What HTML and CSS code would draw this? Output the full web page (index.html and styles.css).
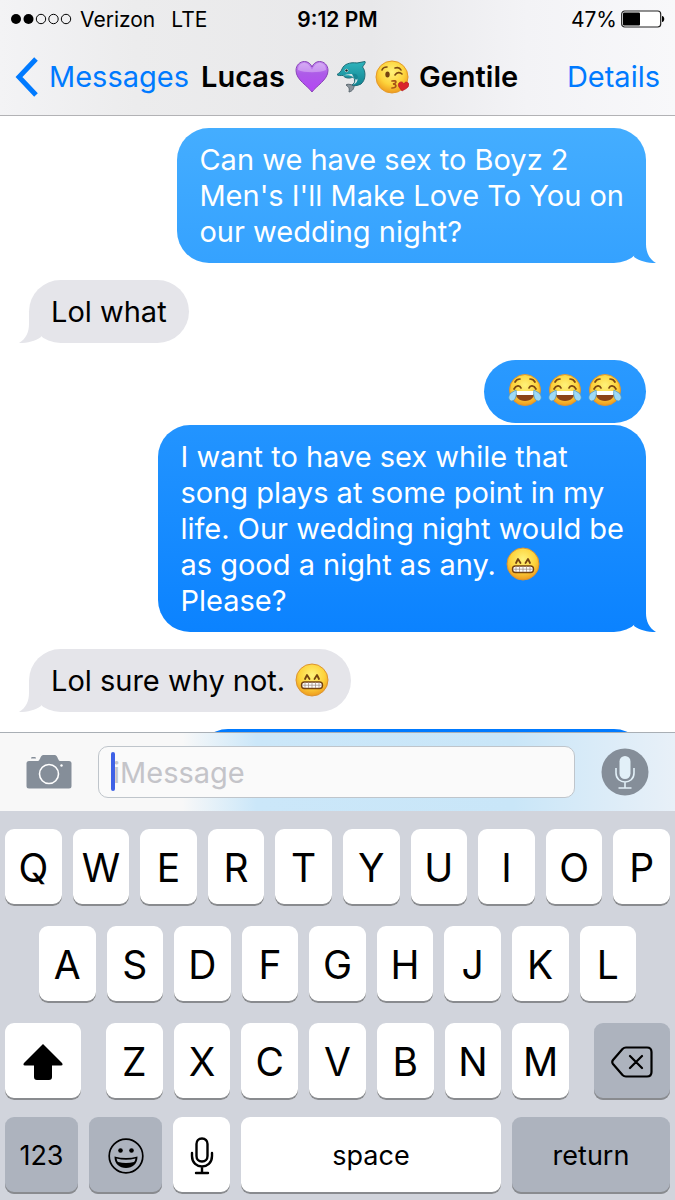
FILE: index.html
```html
<!DOCTYPE html>
<html lang="en">
<head>
  <meta charset="UTF-8">
  <meta name="viewport" content="width=device-width, initial-scale=1.0">
  <title>Messages</title>
  <link rel="stylesheet" href="styles.css">
</head>
<body>
  <!-- emoji shapes -->
  <svg class="defs" aria-hidden="true">
    <defs>
      <radialGradient id="yellow" cx="50%" cy="35%" r="65%">
        <stop offset="0" stop-color="#fff27a"/>
        <stop offset="0.6" stop-color="#fdd33b"/>
        <stop offset="1" stop-color="#ee9a1e"/>
      </radialGradient>
      <linearGradient id="purple" x1="0" y1="0" x2="0" y2="1">
        <stop offset="0" stop-color="#c58cf0"/>
        <stop offset="0.4" stop-color="#ad5be8"/>
        <stop offset="1" stop-color="#b545f5"/>
      </linearGradient>
      <linearGradient id="teal" x1="0" y1="0" x2="0" y2="1">
        <stop offset="0" stop-color="#2fb5bd"/>
        <stop offset="1" stop-color="#118391"/>
      </linearGradient>
      <symbol id="heart" viewBox="0 0 34 34">
        <path d="M17 32C13 26 1 20 1 10.500C1 5 5 1.500 9.500 1.500C13 1.500 16 4 17 7C18 4 21 1.500 24.500 1.500C29 1.500 33 5 33 10.500C33 20 21 26 17 32Z" fill="url(#purple)" stroke="#8945b8"/>
        <path d="M3 10C3 5 6 3 9.500 3C13 3 15 6 17 9.500C19 6 21 3 24.500 3C28 3 31 5 31 10C25 13 9 13 3 10Z" fill="#fff" opacity="0.3"/>
      </symbol>
      <symbol id="dolphin" viewBox="0 0 34 34">
        <path d="M19 20C21 22 20 23 17 25C14 24 12 24 11 25C13 27 15 27 14 32C18 31 19 28 19 26C22 25 26 22 27 18Z" fill="#8a939b" stroke="#59666e"/>
        <path d="M2 14.500C4 13 6 12 7 9C9 4 15 2 22 3L30 1.500C31 2 29 5 27.500 7C31 11 31 20 26 24C22 26 19 26 17 25C20 23 21 20 18 17C14 19 10 18 8 15.500C6 15.500 3 16 2 14.500Z" fill="url(#teal)" stroke="#216b76"/>
        <path d="M8 15.500C12 15 16 15 18 17C21 19 21 22 18 25C23 23 24 18 20 15C17 13 12 14 8 15.500Z" fill="#d5e5e7"/>
        <path d="M17 14C20 13 23 14 23 18C22 20 20 20 19 18Z" fill="#168794"/>
        <circle cx="11.500" cy="10.500" r="1.800" fill="#fff"/>
        <circle cx="11.500" cy="10.500" r="1.300" fill="#12262b"/>
      </symbol>
      <symbol id="kiss" viewBox="0 0 34 34">
        <circle cx="17" cy="17" r="16" fill="url(#yellow)" stroke="#e59a28"/>
        <path d="M7 10C8 7 10 7 12 7M20 8C23 7 25 8 26 10M20 15C22 12 25 12 27 14" fill="none" stroke="#7b4812" stroke-width="1.600" stroke-linecap="round"/>
        <ellipse cx="12.500" cy="14.500" rx="2.200" ry="3" fill="#744210"/>
        <path d="M17 21C22 20 22 23 18 24C22 24 22 28 17 28" fill="none" stroke="#a65416" stroke-width="1.700" stroke-linecap="round"/>
        <path d="M27 31C25 28 22 26 24 23C26 21 28 22 29 24C30 21 33 22 34 24C34 28 30 29 27 31Z" fill="#d9252c" stroke="#b31e24" stroke-width="0.700"/>
      </symbol>
      <symbol id="joy" viewBox="0 0 34 34">
        <circle cx="17" cy="17" r="15.500" fill="url(#yellow)" stroke="#dd9430"/>
        <path d="M7 9C8 7 10 6 12 6M22 6C24 6 26 7 27 9M6 16C8 12 12 12 13 15M21 15C22 12 26 12 28 16" fill="none" stroke="#7b4812" stroke-width="1.700" stroke-linecap="round"/>
        <path d="M7 18H27C27 24 23 28 17 28C11 28 7 24 7 18Z" fill="#8c4318"/>
        <path d="M7.500 18H26.500C26.500 20 26 21.500 25 22H9C8 21.500 7.500 20 7.500 18Z" fill="#fff"/>
        <path d="M8 17C9 21 8 28 3.500 28C0 27 0 23 3 20Z" fill="#9dd9f5" stroke="#549cc7" stroke-width="0.800"/>
        <path d="M26 17C25 21 26 28 30.500 28C34 27 34 23 31 20Z" fill="#9dd9f5" stroke="#549cc7" stroke-width="0.800"/>
      </symbol>
      <symbol id="grin" viewBox="0 0 34 34">
        <circle cx="17" cy="17" r="16" fill="url(#yellow)" stroke="#dd9430"/>
        <path d="M10 16L12 12L14.500 16M19.500 16L22 12L24 16" fill="none" stroke="#744210" stroke-width="1.800" stroke-linejoin="round" stroke-linecap="round"/>
        <rect x="6.500" y="19" width="21" height="6.500" rx="3" fill="#fff" stroke="#744210" stroke-width="1.400"/>
        <path d="M7 22.200H27M10 19V25M13.500 19V25M17 19V25M20.500 19V25M24 19V25" stroke="#9b8982" stroke-width="0.700"/>
      </symbol>
    </defs>
  </svg>

  <header class="header">
    <div class="status">
      <div class="status-left">
        <svg class="signal" viewBox="0 0 62 12" aria-hidden="true">
          <circle cx="6" cy="6" r="5"/>
          <circle cx="18.500" cy="6" r="5"/>
          <g fill="none" stroke="#000">
            <circle cx="31" cy="6" r="4.700"/>
            <circle cx="43.500" cy="6" r="4.700"/>
            <circle cx="56" cy="6" r="4.700"/>
          </g>
        </svg>
        <span>Verizon</span>
        <span class="network">LTE</span>
      </div>
      <div class="time">9:12 PM</div>
      <div class="status-right">
        <span>47%</span>
        <svg class="battery" viewBox="0 0 44 18" aria-hidden="true">
          <rect x="0.700" y="1" width="39" height="16" rx="3" fill="#fff" stroke="#222" stroke-width="1.200"/>
          <rect x="2" y="2.500" width="17" height="13" rx="1"/>
          <path d="M41 6C44 6 44 12 41 12Z"/>
        </svg>
      </div>
    </div>
    <nav class="nav">
      <a class="back" href="#">
        <svg class="chevron" viewBox="0 0 24 40" aria-hidden="true"><path d="M21 2L4 20L21 38" fill="none" stroke="#007aff" stroke-width="5"/></svg>
        <span>Messages</span>
      </a>
      <h1 class="title">
        Lucas
        <span class="faces">
          <svg class="emoji" role="img" aria-label="purple heart"><use href="#heart"/></svg>
          <svg class="emoji" role="img" aria-label="dolphin"><use href="#dolphin"/></svg>
          <svg class="emoji" role="img" aria-label="kiss"><use href="#kiss"/></svg>
        </span>
        Gentile
      </h1>
      <a class="details" href="#">Details</a>
    </nav>
  </header>

  <main class="chat">
    <p class="bubble sent tail">Can we have sex to Boyz 2<br>Men's I'll Make Love To You on<br>our wedding night?</p>
    <p class="bubble received tail">Lol what</p>
    <p class="bubble sent">
      <span class="faces">
        <svg class="emoji" role="img" aria-label="tears of joy"><use href="#joy"/></svg>
        <svg class="emoji" role="img" aria-label="tears of joy"><use href="#joy"/></svg>
        <svg class="emoji" role="img" aria-label="tears of joy"><use href="#joy"/></svg>
      </span>
    </p>
    <p class="bubble sent tail follow">I want to have sex while that<br>song plays at some point in my<br>life. Our wedding night would be<br>as good a night as any. <svg class="emoji" role="img" aria-label="grin"><use href="#grin"/></svg><br>Please?</p>
    <p class="bubble received tail">Lol sure why not. <svg class="emoji" role="img" aria-label="grin"><use href="#grin"/></svg></p>
    <p class="bubble sent next"></p>
  </main>

  <form class="compose">
    <button class="icon-btn" type="button" aria-label="Camera">
      <svg class="camera" viewBox="0 0 46 36" aria-hidden="true">
        <path d="M3 7H12C14 7 14 2 17 1H29C32 2 32 7 34 7H43Q45.500 7 45.500 9.500V32Q45.500 34.500 43 34.500H3Q0.500 34.500 0.500 32V9.500Q0.500 7 3 7ZM6 3H9Q10 3 10 4.500H5Q5 3 6 3Z" fill="#858e99"/>
        <circle cx="23" cy="20" r="9.500" fill="none" stroke="#fff" stroke-width="1.600"/>
        <circle cx="35.500" cy="11.500" r="1.200" fill="#fff"/>
      </svg>
    </button>
    <div class="field">
      <input class="message" type="text" placeholder="iMessage" aria-label="iMessage">
    </div>
    <button class="icon-btn" type="button" aria-label="Record">
      <svg class="record" viewBox="0 0 48 48" aria-hidden="true">
        <circle cx="24" cy="24" r="23.500" fill="#858e99"/>
        <rect x="18.500" y="8" width="11" height="23" rx="5.500" fill="#e2f0f8"/>
        <path d="M15 20V25C15 37 33 37 33 25V20M24 34V40M17.500 40H30.500" fill="none" stroke="#e2f0f8" stroke-width="1.600"/>
      </svg>
    </button>
  </form>

  <div class="keyboard">
    <div class="row">
      <button class="key">Q</button>
      <button class="key">W</button>
      <button class="key">E</button>
      <button class="key">R</button>
      <button class="key">T</button>
      <button class="key">Y</button>
      <button class="key">U</button>
      <button class="key">I</button>
      <button class="key">O</button>
      <button class="key">P</button>
    </div>
    <div class="row row-middle">
      <button class="key">A</button>
      <button class="key">S</button>
      <button class="key">D</button>
      <button class="key">F</button>
      <button class="key">G</button>
      <button class="key">H</button>
      <button class="key">J</button>
      <button class="key">K</button>
      <button class="key">L</button>
    </div>
    <div class="row">
      <button class="key shift" aria-label="Shift">
        <svg width="40" height="38" viewBox="0 0 40 38" aria-hidden="true"><path d="M20 1L39 20Q40.500 22.500 38 22.500H29V34Q29 37 26 37H14Q11 37 11 34V22.500H2Q-0.500 22.500 1 20Z"/></svg>
      </button>
      <button class="key">Z</button>
      <button class="key">X</button>
      <button class="key">C</button>
      <button class="key">V</button>
      <button class="key">B</button>
      <button class="key">N</button>
      <button class="key">M</button>
      <button class="key gray delete" aria-label="Delete">
        <svg width="42" height="32" viewBox="0 0 42 32" aria-hidden="true"><path d="M15 1.500H36Q40.500 1.500 40.500 6V26Q40.500 30.500 36 30.500H15Q13 30.500 11.500 29L2 18Q0.500 16 2 14L11.500 3Q13 1.500 15 1.500ZM19 10L31 22M31 10L19 22" fill="none" stroke="#000" stroke-width="2.200" stroke-linecap="round"/></svg>
      </button>
    </div>
    <div class="row row-last">
      <button class="key word gray numbers">123</button>
      <button class="key gray numbers" aria-label="Emoji">
        <svg width="36" height="36" viewBox="0 0 36 36" aria-hidden="true">
          <circle cx="18" cy="18" r="16.800" fill="none" stroke="#000" stroke-width="1.700"/>
          <circle cx="12.500" cy="12.500" r="2.300"/>
          <circle cx="23.500" cy="12.500" r="2.300"/>
          <path d="M6.500 18.500Q18 21.500 29.500 18.500C29.500 26 24.500 30 18 30C11.500 30 6.500 26 6.500 18.500Z"/>
          <path d="M8.500 20.500Q18 23 27.500 20.500Q27 23 26 24Q18 26 10 24Q9 23 8.500 20.500Z" fill="#adb3be"/>
        </svg>
      </button>
      <button class="key dictate" aria-label="Dictate">
        <svg width="24" height="38" viewBox="0 0 24 38" aria-hidden="true"><path d="M12 1.500C8.500 1.500 6.500 4 6.500 7V19C6.500 22 8.500 24.500 12 24.500S17.500 22 17.500 19V7C17.500 4 15.500 1.500 12 1.500ZM2 16V19C2 33 22 33 22 19V16M12 30V36M6 36H18" fill="none" stroke="#000" stroke-width="2.400" stroke-linecap="round"/></svg>
      </button>
      <button class="key word space">space</button>
      <button class="key word gray return">return</button>
    </div>
  </div>
</body>
</html>
```
FILE: styles.css
```css
*
{
  box-sizing:border-box;
}
body
{
  display:flex;
  flex-direction:column;
  height:100vh;
  margin:0;
  background:#fff;
  color:#000;
  font-family:Inter, "Liberation Sans", sans-serif;
}
button
{
  font-family:inherit;
  color:inherit;
  border:0;
  padding:0;
}
svg
{
  flex:none;
}
.defs
{
  position:absolute;
  width:0;
  height:0;
}

/* header */
.header
{
  border-bottom:1px solid #b2b2b5;
  background:linear-gradient(90deg, #f3f3f5 0%, #ececed 20%, #e8e8ea 55%, #f3f3f6 78%, #f8f8fa 100%);
}
.status
{
  display:grid;
  grid-template-columns:1fr auto 1fr;
  align-items:center;
  height:38px;
  padding:0 10px;
  font-size:21px;
}
.status-left, .status-right
{
  display:flex;
  align-items:center;
}
.status-left
{
  gap:8px;
}
.network
{
  margin-left:8px;
}
.status-right
{
  justify-content:flex-end;
  gap:4px;
}
.time
{
  font-weight:600;
}
.signal
{
  width:62px;
  height:12px;
}
.battery
{
  width:44px;
  height:18px;
}
.nav
{
  display:flex;
  align-items:center;
  gap:12px;
  height:77px;
  padding:0 15px;
  font-size:29px;
}
.nav a
{
  color:#007aff;
  text-decoration:none;
}
.back
{
  display:flex;
  align-items:center;
  gap:10px;
}
.details
{
  margin-left:auto;
}
.chevron
{
  width:24px;
  height:40px;
}
.title
{
  display:flex;
  align-items:center;
  gap:10px;
  margin:0;
  font-size:29px;
  font-weight:600;
}
.faces
{
  display:flex;
  align-items:center;
  gap:6px;
}
.emoji
{
  width:34px;
  height:34px;
  margin-left:2px;
  vertical-align:-6px;
}
.faces .emoji
{
  display:block;
  margin:0;
}

/* conversation */
.chat
{
  flex:1;
  min-height:0;
  overflow:hidden;
  display:flex;
  flex-direction:column;
  align-items:flex-start;
  gap:17px;
  padding:12px 29px 0;
}
.bubble
{
  position:relative;
  flex:none;
  margin:0;
  padding:14px 22px 13px;
  border-radius:32px;
  font-size:29px;
  line-height:36px;
}
.bubble .faces
{
  height:32px;
  padding:0 2px;
  margin-bottom:4px;
}
.sent
{
  align-self:flex-end;
  color:#fff;
}
.sent, .sent.tail::after
{
  background:linear-gradient(#45aeff 10%, #007aff 61%) fixed;
}
.received, .received.tail::after
{
  background:#e5e5ea;
}
.tail::after
{
  content:"";
  position:absolute;
  right:-10px;
  bottom:0;
  width:32px;
  height:32px;
  clip-path:path("M12 0H22V13C22 21 25 28 32 32C23 32 16 30 10 26Z");
}
.received.tail::after
{
  right:auto;
  left:-10px;
  transform:scaleX(-1);
}
.follow
{
  margin-top:-15px;
}
.next
{
  width:73%;
  height:64px;
}

/* message box */
.compose
{
  display:flex;
  align-items:center;
  gap:26px;
  height:79px;
  padding:0 26px;
  border-top:1px solid #a9afb5;
  background:linear-gradient(90deg, #f8f8f8 27%, #cbe7f9 38%, #c9e6f8 76%, #dcecf8 90%, #e8f0f8 100%);
}
.icon-btn
{
  display:flex;
  background:none;
}
.camera
{
  width:46px;
  height:36px;
}
.record
{
  width:48px;
  height:48px;
}
.field
{
  position:relative;
  flex:1;
}
.field::before
{
  content:"";
  position:absolute;
  left:13px;
  top:6px;
  width:4px;
  height:39px;
  border-radius:2px;
  background:#3e61e6;
}
.message
{
  display:block;
  width:100%;
  height:52px;
  padding:0 14px;
  border:1px solid #bfc5cb;
  border-radius:10px;
  background:#fafafa;
  font-family:inherit;
  font-size:29px;
}
.message::placeholder
{
  color:#c4c4c9;
}

/* keyboard */
.keyboard
{
  display:flex;
  flex-direction:column;
  gap:20px;
  padding:18px 5px 6px;
  background:#d1d4dc;
}
.row
{
  display:flex;
  gap:11px;
}
.row-middle
{
  padding:0 34px;
}
.row-last
{
  margin-top:-3px;
}
.key
{
  display:flex;
  align-items:center;
  justify-content:center;
  flex:1 1 0;
  min-width:0;
  height:77px;
  border-radius:9px;
  background:#fff;
  box-shadow:inset 0 -2px 0 #898b8f;
  font-size:39px;
}
.word
{
  font-size:27px;
}
.gray
{
  background:#adb3be;
}
.shift, .delete
{
  flex:0 0 76px;
}
.shift
{
  margin-right:14px;
}
.delete
{
  margin-left:14px;
}
.numbers
{
  flex-grow:73;
}
.dictate
{
  flex-grow:57;
}
.space
{
  flex-grow:260;
}
.return
{
  flex-grow:158;
}
```
